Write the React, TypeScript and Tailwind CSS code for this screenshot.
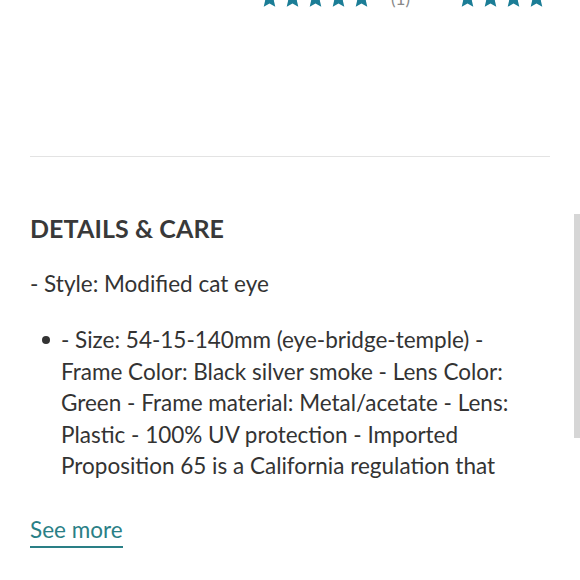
const Star = () => (
  <svg width="21" height="21" viewBox="0 0 24 24" className="fill-[#1b7d96]">
    <path d="M12 1.5l3.1 6.9 7.4.7-5.6 5 1.7 7.4L12 17.6l-6.6 3.9 1.7-7.4-5.6-5 7.4-.7z" />
  </svg>
);

const lines = [
  "- Size: 54-15-140mm (eye-bridge-temple) -",
  "Frame Color: Black silver smoke - Lens Color:",
  "Green - Frame material: Metal/acetate - Lens:",
  "Plastic - 100% UV protection - Imported",
  "Proposition 65 is a California regulation that",
];

const App = (): JSX.Element => (
  <div className="relative h-[580px] w-[580px] overflow-hidden bg-white font-['Lato',sans-serif] text-[#333]">
    <div className="-mt-[12px] flex items-center pl-[259px]">
      <div className="flex gap-[2px]">
        {[0, 1, 2, 3, 4].map((i) => (
          <Star key={i} />
        ))}
      </div>
      <span className="ml-[19px] text-[17px] leading-none text-[#888]">(1)</span>
      <div className="ml-[47px] flex gap-[2px]">
        {[0, 1, 2, 3].map((i) => (
          <Star key={i} />
        ))}
      </div>
    </div>

    <div className="mx-[30px] mt-[147px] border-t border-[#e3e3e3]" />

    <div className="px-[30px]">
      <h2 className="mt-[55px] text-[25px] font-bold leading-[32px] tracking-[0.1px] text-[#393939]">
        DETAILS &amp; CARE
      </h2>
      <p className="mt-[24px] text-[22.5px] leading-[31px]">- Style: Modified cat eye</p>
      <ul className="mt-[25px] pl-[31px]">
        <li className="relative text-[22.5px] leading-[31.5px]">
          <span className="absolute -left-[19px] top-[12px] h-[8px] w-[8px] rounded-full bg-[#333]" />
          {lines.map((l) => (
            <span key={l} className="block whitespace-nowrap">
              {l}
            </span>
          ))}
        </li>
      </ul>
      <a
        href=""
        className="mt-[32px] inline-block border-b-2 border-[#2a7f86] text-[22.5px] leading-[32px] text-[#2a7f86]"
      >
        See more
      </a>
    </div>

    <div className="absolute right-0 top-[214px] h-[224px] w-[6px] bg-[#d6d6d6]" />
  </div>
);

export default App;
